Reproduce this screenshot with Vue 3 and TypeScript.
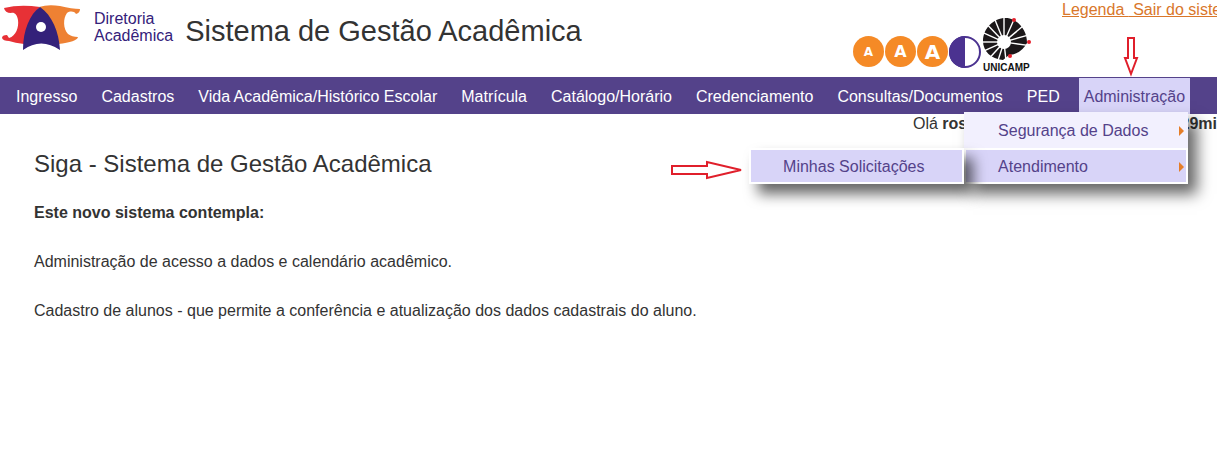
<script setup lang="ts">
interface FontTool {
  label: string
  size: number
}

const sections: string[] = [
  'Ingresso',
  'Cadastros',
  'Vida Acadêmica/Histórico Escolar',
  'Matrícula',
  'Catálogo/Horário',
  'Credenciamento',
  'Consultas/Documentos',
  'PED',
]

const fontTools: FontTool[] = [
  { label: 'Diminuir texto', size: 12 },
  { label: 'Texto normal', size: 16 },
  { label: 'Aumentar texto', size: 20 },
]

const rays: number[] = [-66, -90, -112, -134, -156, -180, -204, -228, -252, -276, -40, -16, 8]

function ray(angle: number): string {
  const a = (angle * Math.PI) / 180
  const c = Math.cos(a)
  const s = Math.sin(a)
  return `M${23 + 6 * c} ${25 + 6 * s}L${23 + 26 * c} ${25 + 26 * s}`
}
</script>

<template>
  <div class="page">
    <header class="header">
      <div class="brand">
        <svg class="logo" viewBox="0 0 82 51" aria-hidden="true">
          <path fill="#e73136" d="M4 8Q20 4 40 7C31 16 26 30 24 44Q15 43 9 41Q3 41 2 38Q2 35 7 35L9 38C16 36 19 27 18 20C17 14 14 12 11 13Q5 13 4 8Z" />
          <path fill="#ee8133" d="M39 7Q48 4 60 6Q72 9 80 9Q80 13 76 14C74 11 70 11 67 13C63 18 63 29 68 34Q72 37 78 37Q77 42 58 44C55 28 48 16 39 7Z" />
          <path fill="#34217a" d="M23 50C23 30 30 14 40 7C52 15 59 32 60 50Q41 37 23 50Z" />
          <circle cx="41" cy="27" r="5" fill="#fff" />
        </svg>
        <span class="department">Diretoria<br />Acadêmica</span>
      </div>
      <div class="title">Sistema de Gestão Acadêmica</div>
      <div class="tools">
        <button v-for="tool in fontTools" :key="tool.label" class="round" type="button" :aria-label="tool.label">
          <span class="letter" :style="{ fontSize: tool.size + 'px' }">A</span>
        </button>
        <button class="contrast" type="button" aria-label="Contraste">
          <svg viewBox="0 0 32 32">
            <circle cx="16" cy="16" r="15" fill="#fff" stroke="#4b3290" stroke-width="2" />
            <path d="M16 0A16 16 0 0 0 16 32Z" fill="#4b3290" />
          </svg>
        </button>
        <div class="university">
          <svg class="emblem" viewBox="0 0 50 46" aria-hidden="true">
            <path d="M33 3C19-4 2 8 2 24C2 34 10 42 22 43L28 38Q40 37 46 26C46 16 41 8 33 3Z" fill="#1b1719" />
            <path v-for="angle in rays" :key="angle" :d="ray(angle)" stroke="#fff" stroke-width="1.4" />
            <circle cx="23" cy="25" r="7" fill="#fff" />
            <circle cx="33" cy="3" r="2" fill="#e51f2b" />
            <circle cx="48" cy="25" r="2" fill="#e51f2b" />
            <circle cx="29" cy="39" r="2" fill="#e51f2b" />
          </svg>
          <span class="wordmark">UNICAMP</span>
        </div>
      </div>
      <div class="session">
        <a href="#legenda">Legenda </a><a href="#sair">&nbsp;Sair do siste</a>
      </div>
      <svg class="pointer down" viewBox="0 0 16 42" aria-hidden="true">
        <path d="M5 2H11V22H14L8 38L2 22H5Z" />
      </svg>
    </header>

    <nav class="nav">
      <ul class="menu">
        <li v-for="section in sections" :key="section"><a href="#">{{ section }}</a></li>
        <li class="current">
          <a href="#">Administração</a>
          <ul class="dropdown">
            <li><a href="#">Segurança de Dados</a></li>
            <li class="open">
              <a href="#">Atendimento</a>
              <ul class="submenu">
                <li><a href="#">Minhas Solicitações</a></li>
              </ul>
              <svg class="pointer right" viewBox="0 0 74 20" aria-hidden="true">
                <path d="M2 6H37V2L71 10L37 18V14H2Z" />
              </svg>
            </li>
          </ul>
        </li>
      </ul>
    </nav>

    <div class="greeting">
      <span>Olá <b>ros</b></span>
      <b>29mi</b>
    </div>

    <main class="content">
      <h1>Siga - Sistema de Gestão Acadêmica</h1>
      <p><strong>Este novo sistema contempla:</strong></p>
      <p>Administração de acesso a dados e calendário acadêmico.</p>
      <p>Cadastro de alunos - que permite a conferência e atualização dos dados cadastrais do aluno.</p>
    </main>
  </div>
</template>

<style>
body {
  background: #fff;
}
</style>

<style scoped>
.page {
  overflow: hidden;
  color: #333;
  font: 16px/20px "Liberation Sans", Arial, sans-serif;
}

a {
  text-decoration: none;
}

ul {
  margin: 0;
  padding: 0;
  list-style: none;
}

.header {
  position: relative;
  display: flex;
  align-items: flex-start;
  height: 77px;
  white-space: nowrap;
}

.brand {
  display: flex;
  gap: 12px;
}

.logo {
  width: 82px;
  height: 51px;
}

.department {
  padding-top: 10px;
  color: #34217a;
  line-height: 17px;
}

.title {
  margin: 15px 0 0 12px;
  font-size: 29px;
  line-height: 32px;
}

.tools {
  display: flex;
  align-items: flex-end;
  gap: 1px;
  height: 73px;
  margin-left: auto;
}

.round,
.contrast {
  display: grid;
  place-items: center;
  width: 31px;
  height: 31px;
  margin-bottom: 6px;
  padding: 0;
  border: 0;
  border-radius: 50%;
  background: #f58a26;
}

.round {
  color: #fff;
  font-family: "DejaVu Sans", Verdana, sans-serif;
  font-weight: bold;
}

.letter {
  line-height: 20px;
}

.contrast {
  background: none;
}

.contrast svg {
  width: 32px;
  height: 32px;
}

.university {
  display: flex;
  flex-direction: column;
  width: 50px;
}

.emblem {
  width: 50px;
  height: 46px;
}

.wordmark {
  padding-left: 2px;
  color: #111;
  font-size: 10px;
  font-weight: bold;
  line-height: 10px;
}

.session {
  width: 155px;
  margin-left: 31px;
}

.session a {
  color: #d9772b;
  text-decoration: underline;
}

.pointer {
  position: absolute;
  fill: #fff;
  stroke: #e01f2b;
  stroke-width: 2;
}

.down {
  right: 78px;
  bottom: -1px;
  width: 16px;
  height: 42px;
}

.nav {
  height: 37px;
  background: #54428a;
  white-space: nowrap;
}

.menu {
  display: flex;
  gap: 14px;
  padding: 1px 0 0 11px;
}

.menu > li > a {
  display: block;
  padding: 1px 5px 0;
  color: #fff;
  line-height: 35px;
}

.current {
  position: relative;
  background: #d8d4f8;
}

.menu > .current > a {
  color: #54428a;
}

.dropdown,
.submenu {
  position: absolute;
  z-index: 1;
  box-shadow: 9px 10px 14px rgba(0, 0, 0, 0.6);
}

.dropdown {
  top: 34px;
  right: 2px;
  width: 224px;
}

.dropdown li {
  box-sizing: border-box;
  height: 36px;
  border: 2px solid #fff;
  background: #f2f0fe;
}

.dropdown > li:first-child {
  border-color: #f2f0fe;
}

.dropdown a {
  display: block;
  padding-left: 32px;
  color: #54428a;
  line-height: 34px;
}

.dropdown > li > a {
  display: flex;
  align-items: center;
  justify-content: space-between;
  padding-right: 2px;
}

.dropdown > li > a::after {
  border: 5px solid transparent;
  border-right: 0;
  border-left-color: #e57d28;
  content: "";
}

.dropdown > .open {
  position: relative;
  background: #d8d4f8;
}

.submenu {
  top: -2px;
  right: 222px;
  width: 215px;
}

.submenu li {
  background: #d8d4f8;
}

.right {
  top: 10px;
  right: 442px;
  width: 74px;
  height: 20px;
}

.greeting {
  display: flex;
  justify-content: space-between;
  width: 304px;
  margin-left: auto;
}

.content {
  padding: 16px 34px;
}

.content h1 {
  margin: 0 0 25px;
  font-size: 24px;
  font-weight: normal;
  line-height: 28px;
}

.content p {
  margin: 0 0 29px;
}
</style>
